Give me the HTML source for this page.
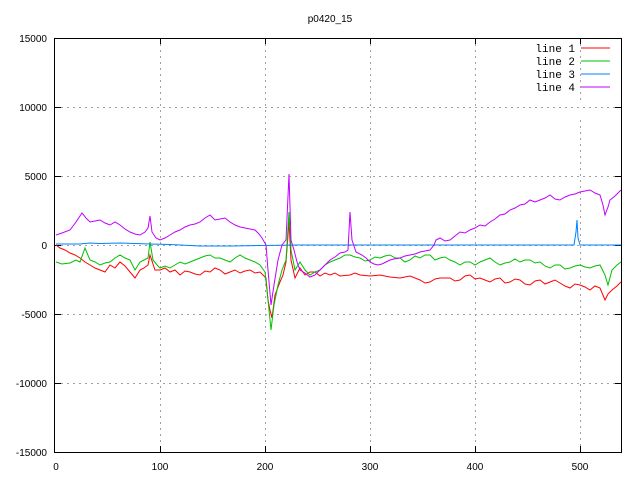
<!DOCTYPE html>
<html><head><style>body{margin:0;background:#fff}svg{display:block}text{font-family:"Liberation Sans",sans-serif;font-size:10px}text.m{font-family:"Liberation Mono",monospace;font-size:11px}</style></head><body>
<svg width="640" height="480" xmlns="http://www.w3.org/2000/svg">
<rect width="640" height="480" fill="#fff"/>
<g stroke="#a0a0a0" stroke-dasharray="2,4" stroke-width="1">
<path d="M160.5 38V452M265.5 38V452M370.5 38V452M475.5 38V452M580.5 38V100M580.5 120V452"/>
<path d="M55 107.5H621M55 176.5H621M55 245.5H621M55 314.5H621M55 383.5H621"/>
</g>
<rect x="54.5" y="38.5" width="567" height="414" fill="none" stroke="#000"/>
<g stroke="#000"><path d="M55 107.5h6M55 176.5h6M55 245.5h6M55 314.5h6M55 383.5h6M621 107.5h-6M621 176.5h-6M621 245.5h-6M621 314.5h-6M621 383.5h-6M160.5 452v-6M265.5 452v-6M370.5 452v-6M475.5 452v-6M580.5 452v-6M160.5 38v6M265.5 38v6M370.5 38v6M475.5 38v6M580.5 38v6"/></g>
<g text-anchor="end"><text x="47" y="42">15000</text><text x="47" y="111">10000</text><text x="47" y="180">5000</text><text x="47" y="249">0</text><text x="47" y="318">-5000</text><text x="47" y="387">-10000</text><text x="47" y="456">-15000</text></g>
<g text-anchor="middle"><text x="56" y="470">0</text><text x="160" y="470">100</text><text x="265" y="470">200</text><text x="370" y="470">300</text><text x="475" y="470">400</text><text x="580" y="470">500</text><text x="330" y="22">p0420_15</text></g>
<g text-anchor="end"><text class="m" x="575" y="52">line 1</text><text class="m" x="575" y="65">line 2</text><text class="m" x="575" y="78">line 3</text><text class="m" x="575" y="91">line 4</text></g>
<path d="M581 48h29" stroke="#f00"/><path d="M581 61h29" stroke="#00c000"/><path d="M581 74h29" stroke="#0080ff"/><path d="M581 87h29" stroke="#c000ff"/>
<g fill="none" stroke-width="1">
<polyline stroke="#f00" points="56,245 60,248 65,250 70,253 75,255 80,258 85,262 90,265 95,268 100,270 105,272 110,265 115,268 120,262 125,266 130,272 135,278 140,270 144,268 148,265 150,255 155,270 160,270 165,268 170,272 175,270 180,275 185,271 190,272 195,274 200,275 205,271 210,272 215,268 220,270 225,274 230,272 235,270 240,273 245,271 250,270 255,273 260,272 266,278 268,300 270,310 272,318 275,295 280,282 283,275 286,262 289,222 291,260 295,278 300,268 305,275 310,272 315,272 320,276 325,273 330,275 335,273 340,276 350,275 355,273 360,275 370,276 380,275 390,277 400,278 410,276 420,280 425,283 430,282 435,279 440,278 450,278 455,281 460,280 465,276 470,275 475,279 480,278 485,280 490,282 495,279 500,278 505,283 510,282 515,279 520,280 525,284 530,285 535,281 540,280 545,284 550,282 555,280 560,283 565,286 570,288 575,284 580,285 585,287 590,290 595,286 600,288 605,300 608,294 612,290 617,286 621,282"/>
<polyline stroke="#00c000" points="56,262 62,264 70,263 76,260 80,262 85,248 90,260 95,262 100,265 105,263 110,262 115,258 120,255 125,258 130,260 135,270 140,262 144,260 148,258 150,242 153,260 158,266 160,268 165,266 170,268 175,265 180,262 185,264 190,262 195,260 200,258 205,256 210,255 215,258 220,258 225,260 230,262 235,258 240,255 245,258 250,260 255,262 260,265 265,272 268,300 271,330 274,305 278,285 282,270 286,260 289,212 291,250 295,270 300,262 305,270 310,275 315,272 320,270 325,265 330,262 335,260 340,258 345,255 350,255 355,257 360,258 365,261 370,260 375,257 380,258 385,256 390,255 395,258 400,258 405,262 410,260 415,256 420,258 425,255 430,255 435,260 440,258 445,257 450,260 455,262 460,265 465,262 470,262 475,265 480,262 485,260 490,258 495,262 500,265 505,263 510,262 515,259 520,262 525,260 530,260 535,263 540,262 545,266 550,268 555,265 560,265 565,269 570,268 575,266 580,265 585,267 590,268 595,266 600,265 605,275 608,285 612,270 617,265 621,262"/>
<polyline stroke="#0080ff" points="56,244 80,244 90,243 100,243.5 120,243 150,244 170,244.5 200,246 230,246 260,245.5 300,245 350,245 400,245 450,245 500,245 560,245 574,245 576,232 577,220 578,238 580,245 600,245 621,245"/>
<polyline stroke="#c000ff" points="56,235 62,233 70,230 76,222 82,213 86,218 90,222 95,221 100,220 105,223 110,225 115,222 120,225 125,229 130,232 135,234 140,235 145,232 148,228 150,216 152,232 156,238 160,240 165,238 170,235 175,232 180,230 185,227 190,225 195,224 200,222 205,218 210,215 213,218 215,220 220,219 225,218 230,222 235,225 240,227 245,228 250,229 255,230 259,234 262,238 266,245 268,270 271,305 274,285 278,260 282,245 286,240 289,174 291,240 294,250 297,262 300,270 305,273 310,277 315,275 320,270 325,265 330,260 335,257 340,253 345,252 348,250 350,212 352,240 356,252 362,255 366,258 370,262 374,264 378,265 382,264 386,262 390,260 394,259 400,258 405,256 410,255 415,254 420,252 425,251 430,250 434,245 436,240 440,238 445,241 450,240 455,236 460,232 465,233 470,230 475,228 480,225 485,226 490,222 495,219 500,215 505,214 510,210 515,208 520,205 525,204 530,200 535,202 540,200 545,198 550,195 555,199 560,200 565,197 570,195 575,194 580,192 585,191 590,190 595,193 600,195 603,205 605,215 608,207 610,200 615,196 618,193 621,190"/>
</g>
</svg>
</body></html>
